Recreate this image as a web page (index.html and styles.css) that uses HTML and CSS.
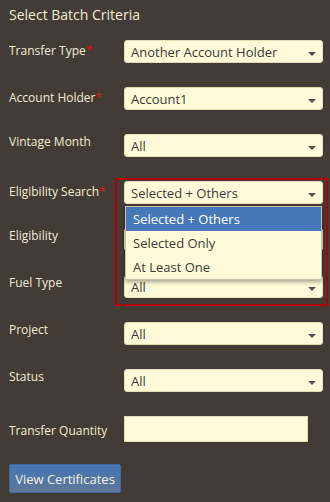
FILE: index.html
```html
<html>

<head>
  <meta charset="utf8">
  <title>Select Batch Criteria</title>
  <link rel="stylesheet" href="styles.css">
</head>

<body>
  <section class="wrapper">
    <h1 class="title">Select Batch Criteria</h1>

    <div class="row">
      <label class="label required">Transfer Type<span class="star">*</span></label>
      <div class="select">Another Account Holder<span class="caret"></span></div>
    </div>

    <div class="row">
      <label class="label required">Account Holder<span class="star">*</span></label>
      <div class="select">Account1<span class="caret"></span></div>
    </div>

    <div class="row">
      <label class="label">Vintage Month</label>
      <div class="select">All<span class="caret"></span></div>
    </div>

    <div class="row">
      <label class="label required">Eligibility Search<span class="star">*</span></label>
      <div class="select-wrap">
        <div class="select">Selected + Others<span class="caret"></span></div>
        <ul class="dropdown">
          <li class="active">Selected + Others</li>
          <li>Selected Only</li>
          <li>At Least One</li>
        </ul>
        <div class="highlight"></div>
      </div>
    </div>

    <div class="row">
      <label class="label">Eligibility</label>
      <!-- covered by the open dropdown above -->
      <div class="select"><span class="caret"></span></div>
    </div>

    <div class="row">
      <label class="label">Fuel Type</label>
      <div class="select">All<span class="caret"></span></div>
    </div>

    <div class="row">
      <label class="label">Project</label>
      <div class="select">All<span class="caret"></span></div>
    </div>

    <div class="row">
      <label class="label">Status</label>
      <div class="select">All<span class="caret"></span></div>
    </div>

    <div class="row row-input">
      <label class="label">Transfer Quantity</label>
      <div class="input"></div>
    </div>

    <button class="btn">View Certificates</button>
  </section>
</body>

</html>
```

FILE: styles.css
```css
* {
  margin: 0;
  padding: 0;
  box-sizing: border-box;
}

body {
  background: #433b35;
  font-family: "Open Sans", "Liberation Sans", sans-serif;
  font-size: 13px;
  color: #f2ecd8;
}

.wrapper {
  padding: 5px 0 0 9px;
}

.title {
  font-size: 14px;
  font-weight: normal;
  line-height: 20px;
  height: 35px;
}

.row {
  display: flex;
  align-items: flex-start;
  height: 47px;
}

.label {
  width: 115px;
  line-height: 15px;
  font-size: 12px;
  font-weight: 500;
}

.label.required {
  padding-top: 3px;
}

.star {
  color: #e0141c;
}

.select-wrap {
  position: relative;
}

.select {
  position: relative;
  width: 199px;
  height: 23px;
  padding: 0 0 0 6px;
  line-height: 22px;
  background: #fffad8;
  border: 1px solid #e6dcb4;
  border-radius: 3px;
  color: #3a3a3a;
  font-size: 13px;
}

.caret {
  position: absolute;
  right: 6px;
  top: 11px;
  border-left: 4px solid transparent;
  border-right: 4px solid transparent;
  border-top: 4px solid #505050;
}

.dropdown {
  position: absolute;
  left: 1px;
  top: 25px;
  width: 197px;
  list-style: none;
  background: #fffad8;
  border: 1px solid #c8c0a8;
  box-shadow: 0 2px 4px rgba(0, 0, 0, 0.35);
  z-index: 2;
}

.dropdown li {
  height: 24px;
  line-height: 24px;
  padding-left: 7px;
  color: #3a3a3a;
  font-size: 13px;
}

.dropdown li.active {
  background: #4677b8;
  color: #fff;
}

.highlight {
  position: absolute;
  left: -9px;
  top: -3px;
  width: 213px;
  height: 128px;
  border: 2px solid #b30000;
  z-index: 3;
}

.row-input {
  height: 48px;
}

.row-input .label {
  padding-top: 7px;
}

.input {
  width: 184px;
  height: 26px;
  background: #fffad8;
  border: 1px solid #e6dcb4;
}

.btn {
  width: 112px;
  height: 29px;
  border: 1px solid #3f6aa0;
  border-radius: 2px;
  background: linear-gradient(#4576b6, #5e7797);
  color: #f4f0e0;
  font-family: "Open Sans", "Liberation Sans", sans-serif;
  font-size: 13px;
}
```
